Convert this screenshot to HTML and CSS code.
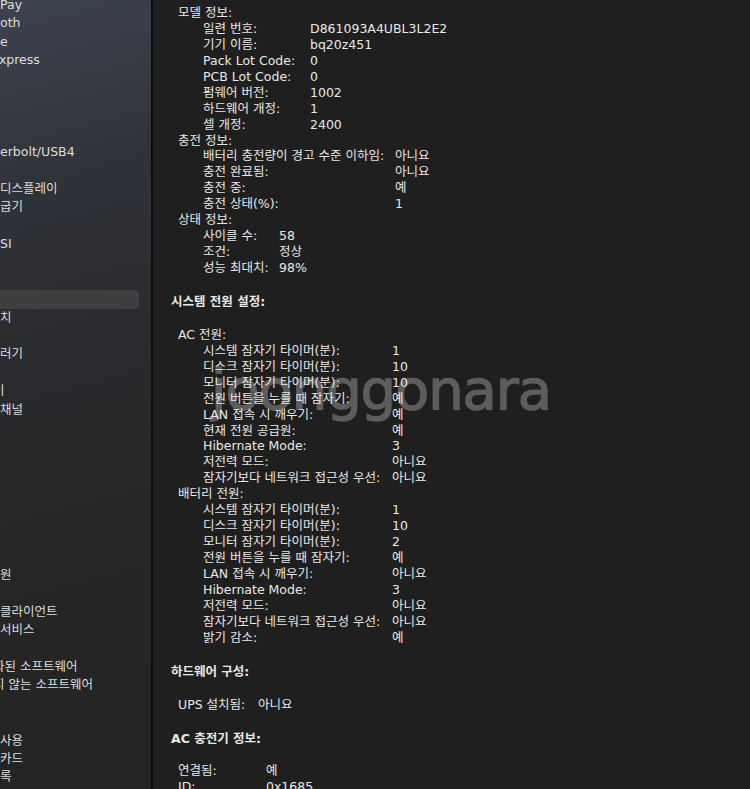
FILE: index.html
```html
<!DOCTYPE html>
<html lang="ko">
<head>
<meta charset="UTF-8">
<meta name="viewport" content="width=device-width, initial-scale=1.0">
<title>시스템 정보 - 전원</title>
<link rel="stylesheet" href="styles.css">
</head>
<body class="page">

<div class="window">
    <aside class="sidebar">
        <ul class="nav">
            <li>Pay</li>
            <li>oth</li>
            <li>e</li>
            <li><span class="cut-wide">E</span>xpress</li>
            <li></li>
            <li></li>
            <li></li>
            <li></li>
            <li>erbolt/USB4</li>
            <li></li>
            <li>디스플레이</li>
            <li>굽기</li>
            <li></li>
            <li>SI</li>
            <li></li>
            <li></li>
            <li class="selected"></li>
            <li>치</li>
            <li></li>
            <li>러기</li>
            <li></li>
            <li><span class="cut">이</span></li>
            <li>채널</li>
            <li></li>
            <li></li>
            <li></li>
            <li></li>
            <li></li>
            <li></li>
            <li></li>
            <li></li>
            <li>원</li>
            <li></li>
            <li>클라이언트</li>
            <li>서비스</li>
            <li></li>
            <li><span class="cut">화</span>된 소프트웨어</li>
            <li><span class="cut">지</span> 않는 소프트웨어</li>
            <li></li>
            <li></li>
            <li>사용</li>
            <li>카드</li>
            <li>록</li>
        </ul>
    </aside>

    <main class="report">
        <section class="group model">
            <div class="title">모델 정보:</div>
            <div class="items">
                <div class="row"><span>일련 번호:</span><span>D861093A4UBL3L2E2</span></div>
                <div class="row"><span>기기 이름:</span><span>bq20z451</span></div>
                <div class="row"><span>Pack Lot Code:</span><span>0</span></div>
                <div class="row"><span>PCB Lot Code:</span><span>0</span></div>
                <div class="row"><span>펌웨어 버전:</span><span>1002</span></div>
                <div class="row"><span>하드웨어 개정:</span><span>1</span></div>
                <div class="row"><span>셀 개정:</span><span>2400</span></div>
            </div>
        </section>
        <section class="group charge">
            <div class="title">충전 정보:</div>
            <div class="items">
                <div class="row"><span>배터리 충전량이 경고 수준 이하임:</span><span>아니요</span></div>
                <div class="row"><span>충전 완료됨:</span><span>아니요</span></div>
                <div class="row"><span>충전 중:</span><span>예</span></div>
                <div class="row"><span>충전 상태(%):</span><span>1</span></div>
            </div>
        </section>
        <section class="group status">
            <div class="title">상태 정보:</div>
            <div class="items">
                <div class="row"><span>사이클 수:</span><span>58</span></div>
                <div class="row"><span>조건:</span><span>정상</span></div>
                <div class="row"><span>성능 최대치:</span><span>98%</span></div>
            </div>
        </section>

        <h2 class="heading">시스템 전원 설정:</h2>

        <section class="group power">
            <div class="title">AC 전원:</div>
            <div class="items">
                <div class="row"><span>시스템 잠자기 타이머(분):</span><span>1</span></div>
                <div class="row"><span>디스크 잠자기 타이머(분):</span><span>10</span></div>
                <div class="row"><span>모니터 잠자기 타이머(분):</span><span>10</span></div>
                <div class="row"><span>전원 버튼을 누를 때 잠자기:</span><span>예</span></div>
                <div class="row"><span>LAN 접속 시 깨우기:</span><span>예</span></div>
                <div class="row"><span>현재 전원 공급원:</span><span>예</span></div>
                <div class="row"><span>Hibernate Mode:</span><span>3</span></div>
                <div class="row"><span>저전력 모드:</span><span>아니요</span></div>
                <div class="row"><span>잠자기보다 네트워크 접근성 우선:</span><span>아니요</span></div>
            </div>
        </section>
        <section class="group power">
            <div class="title">배터리 전원:</div>
            <div class="items">
                <div class="row"><span>시스템 잠자기 타이머(분):</span><span>1</span></div>
                <div class="row"><span>디스크 잠자기 타이머(분):</span><span>10</span></div>
                <div class="row"><span>모니터 잠자기 타이머(분):</span><span>2</span></div>
                <div class="row"><span>전원 버튼을 누를 때 잠자기:</span><span>예</span></div>
                <div class="row"><span>LAN 접속 시 깨우기:</span><span>아니요</span></div>
                <div class="row"><span>Hibernate Mode:</span><span>3</span></div>
                <div class="row"><span>저전력 모드:</span><span>아니요</span></div>
                <div class="row"><span>잠자기보다 네트워크 접근성 우선:</span><span>아니요</span></div>
                <div class="row"><span>밝기 감소:</span><span>예</span></div>
            </div>
        </section>

        <h2 class="heading">하드웨어 구성:</h2>

        <div class="row ups"><span>UPS 설치됨:</span><span>아니요</span></div>

        <h2 class="heading">AC 충전기 정보:</h2>

        <div class="row charger"><span>연결됨:</span><span>예</span></div>
        <div class="row charger"><span>ID:</span><span>0x1685</span></div>
    </main>

    <div class="watermark">joonggonara</div>
</div>

</body>
</html>
```

FILE: styles.css
```css
.page {
    margin: 0;
    padding: 0;
    background-color: #1f1f1f;
    font-family: "DejaVu Sans", "Noto Sans CJK KR", sans-serif;
    font-feature-settings: "palt";
    font-size: 12.5px;
    color: #e8e8e8;
}

.window {
    position: relative;
    display: flex;
    width: 750px;
    height: 789px;
    overflow: hidden;
}

/* left source list, cropped on its left side */
.sidebar {
    flex: 0 0 151px;
    border-right: 2px solid #0c0c0c;
    background: linear-gradient(165deg, #3d434f 0%, #30333a 22%, #292a2d 48%, #252525 75%, #242424 100%);
    overflow: hidden;
}

.nav {
    list-style: none;
    margin: -4px 0 0 0;
    padding: 0;
}

.nav li {
    height: 18.4px;
    line-height: 18.4px;
    white-space: nowrap;
    color: #dedede;
}

.nav li.selected {
    width: 139px;
    border-radius: 0 5px 5px 0;
    background-color: #3f3f3f;
}

.cut {
    display: inline-block;
    margin-left: -7px;
}

.cut-wide {
    display: inline-block;
    margin-left: -9px;
}

/* right report pane */
.report {
    position: relative;
    z-index: 1;
    flex: 1;
    padding: 5px 0 0 18px;
    line-height: 15.94px;
    white-space: nowrap;
}

.heading {
    margin: 18px 0 17px 0;
    font-size: 12.5px;
    font-weight: bold;
}

.title {
    padding-left: 7px;
}

.items {
    padding-left: 32px;
}

.row {
    display: grid;
    grid-template-columns: var(--key) auto;
}

.model { --key: 107px; }
.charge { --key: 192px; }
.status { --key: 76px; }
.power { --key: 189px; }

.ups {
    --key: 80px;
    padding-left: 7px;
}

.charger {
    --key: 88px;
    padding-left: 7px;
}

/* site watermark, sits under the report text */
.watermark {
    position: absolute;
    z-index: 0;
    left: 211px;
    top: 362px;
    font-family: "DejaVu Sans", sans-serif;
    font-size: 56px;
    line-height: 56px;
    letter-spacing: -1.1px;
    color: #5d5d5d;
    -webkit-text-stroke: 1.4px #5d5d5d;
    pointer-events: none;
}
```
